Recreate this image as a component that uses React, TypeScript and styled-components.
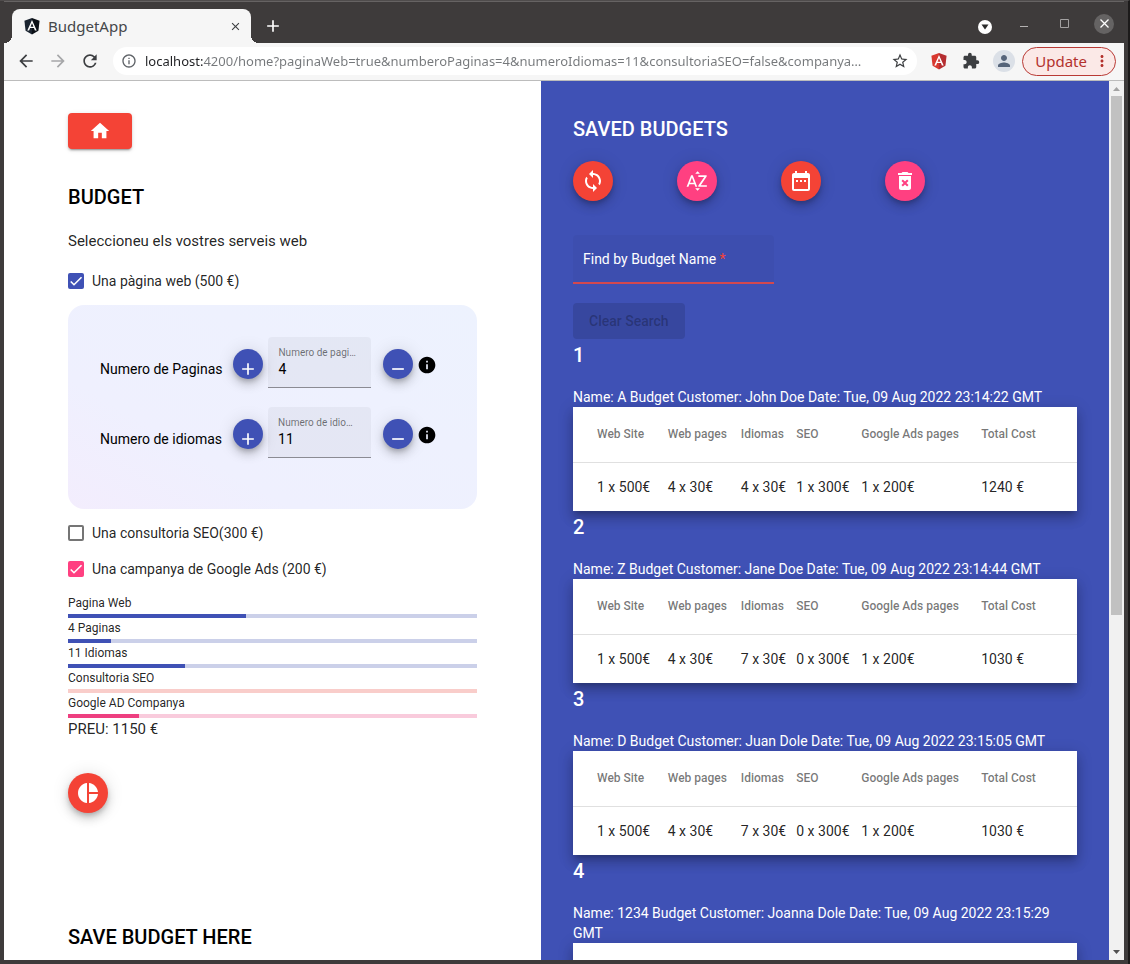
import React, { useState } from "react";
import styled, { createGlobalStyle } from "styled-components";
import {
  MdAdd,
  MdArrowBack,
  MdArrowForward,
  MdClose,
  MdDateRange,
  MdDeleteForever,
  MdExtension,
  MdHome,
  MdInfo,
  MdInfoOutline,
  MdMoreVert,
  MdPerson,
  MdPieChart,
  MdRefresh,
  MdRemove,
  MdSortByAlpha,
  MdStarBorder,
  MdSync,
} from "react-icons/md";

const color = {
  primary: "#3f51b5",
  accent: "#ff4081",
  warn: "#f44336",
  text: "rgba(0, 0, 0, 0.87)",
};

const chromeFont = '"Noto Sans", "Open Sans", sans-serif';
const fabShadow =
  "0 3px 5px -1px rgba(0,0,0,.2), 0 6px 10px 0 rgba(0,0,0,.14), 0 1px 18px 0 rgba(0,0,0,.12)";
const tick =
  "url(\"data:image/svg+xml,%3Csvg xmlns='http://www.w3.org/2000/svg' viewBox='0 0 24 24'%3E%3Cpath d='M4.1 12.7 9 17.6 20.3 6.3' fill='none' stroke='white' stroke-width='2.4'/%3E%3C/svg%3E\")";

const GlobalStyle = createGlobalStyle`
  *, *::before, *::after { box-sizing: border-box; }
  html, body, #root { height: 100%; }
  body { margin: 0; background: #3e3b3b; font-family: Roboto, sans-serif; font-size: 14px; color: ${color.text}; }
  button, input { font-family: inherit; }
  button { cursor: pointer; }
  svg { display: block; flex: none; }
`;

/* ---------- browser window ---------- */

const BrowserWindow = styled.div`
  display: flex;
  flex-direction: column;
  height: 100vh;
  overflow: hidden;
  padding: 0 4px 4px;
  background: #3e3b3b;
  border-top: 1px solid #4f4c4c;
  border-right: 2px solid #1c1a1a;
`;

const TitleBar = styled.header`
  display: flex;
  flex: none;
  align-items: flex-end;
  height: 42px;
  padding: 0 10px 0 8px;
  border-top: 1px solid #666363;
`;

const Tab = styled.div`
  position: relative;
  display: flex;
  align-items: center;
  gap: 8px;
  width: 239px;
  height: 34px;
  padding: 0 10px 0 12px;
  border-radius: 8px 8px 0 0;
  background: #f6f6f6;
  color: #45474a;
  font: 15px ${chromeFont};

  &::before,
  &::after {
    content: "";
    position: absolute;
    bottom: 0;
    width: 8px;
    height: 8px;
  }
  &::before {
    right: 100%;
    background: radial-gradient(circle at 0 0, transparent 8px, #f6f6f6 8px);
  }
  &::after {
    left: 100%;
    background: radial-gradient(circle at 100% 0, transparent 8px, #f6f6f6 8px);
  }
`;

const TabTitle = styled.span`
  flex: 1;
`;

const GlyphButton = styled.button<{ $color?: string; $size?: number }>`
  display: flex;
  flex: none;
  align-items: center;
  justify-content: center;
  width: ${(p) => p.$size ?? 20}px;
  height: ${(p) => p.$size ?? 20}px;
  padding: 0;
  border: 0;
  background: none;
  color: ${(p) => p.$color ?? "#3c3e41"};
`;

const NewTab = styled(GlyphButton)`
  height: 34px;
  margin-left: 12px;
`;

const WindowControls = styled.div`
  display: flex;
  align-items: center;
  align-self: center;
  gap: 20px;
  margin-left: auto;
  padding-top: 2px;
`;

const TabSearch = styled(GlyphButton)`
  width: 14px;
  height: 14px;
  margin: 6px 2px 0 0;
  border-radius: 50%;
  background: #fff;
`;

const CloseWindow = styled(GlyphButton)`
  border-radius: 50%;
  background: #656363;
`;

const Toolbar = styled.div`
  display: flex;
  flex: none;
  align-items: center;
  height: 38px;
  padding: 0 8px 1px 12px;
  border-bottom: 1px solid #bcbcbc;
  background: #f6f6f6;
`;

const NavButtons = styled.nav`
  display: flex;
  gap: 12px;
`;

const AddressBar = styled.div`
  display: flex;
  flex: 1;
  align-items: center;
  gap: 8px;
  min-width: 0;
  height: 28px;
  margin: 0 12px 0 13px;
  padding: 0 8px;
  border-radius: 14px;
  background: #fff;
`;

const Url = styled.input`
  flex: 1;
  min-width: 0;
  padding: 0;
  border: 0;
  outline: 0;
  background: linear-gradient(90deg, #202124 58px, #75787b 58px);
  background-clip: text;
  -webkit-text-fill-color: transparent;
  font: 13px/20px ${chromeFont};
  text-overflow: ellipsis;
`;

const ToolbarActions = styled.div`
  display: flex;
  align-items: center;
  gap: 12px;
`;

const Avatar = styled(GlyphButton)`
  border-radius: 50%;
  background: #dbe0e7;
`;

const UpdateButton = styled.button`
  display: flex;
  align-items: center;
  gap: 6px;
  height: 29px;
  margin-left: 7px;
  padding: 0 4px 0 12px;
  border: 1px solid #b93a35;
  border-radius: 15px;
  background: #fbe9e7;
  color: #b3312c;
  font: 15px ${chromeFont};
`;

const Viewport = styled.div`
  display: flex;
  flex: 1;
  min-height: 0;
`;

const Page = styled.main`
  display: grid;
  flex: 1;
  grid-template-columns: minmax(0, 537fr) minmax(0, 568fr);
  overflow: hidden;
  background: #fff;
`;

const ScrollTrack = styled.div`
  display: flex;
  flex: none;
  flex-direction: column;
  align-items: center;
  width: 15px;
  background: #f1f1f1;
`;

const ScrollArrow = styled.svg`
  width: 15px;
  height: 15px;
`;

const ScrollThumb = styled.div`
  width: 11px;
  height: 59%;
  background: #c1c1c1;
`;

const ScrollSpace = styled.div`
  flex: 1;
`;

/* ---------- shared page parts ---------- */

const Heading = styled.h2`
  margin: 0 0 16px;
  font-size: 20px;
  font-weight: 500;
  line-height: 32px;
  color: inherit;
`;

const Fab = styled.button<{ $bg: string; $size?: number }>`
  display: flex;
  flex: none;
  align-items: center;
  justify-content: center;
  width: ${(p) => p.$size ?? 40}px;
  height: ${(p) => p.$size ?? 40}px;
  padding: 0;
  border: 0;
  border-radius: 50%;
  background: ${(p) => p.$bg};
  color: #fff;
  box-shadow: ${fabShadow};
`;

/* ---------- budget form ---------- */

const FormColumn = styled.section`
  padding: 32px 64px;
  color: #000;
`;

const HomeLink = styled.a`
  display: flex;
  align-items: center;
  justify-content: center;
  width: 64px;
  height: 36px;
  margin-bottom: 32px;
  border-radius: 4px;
  background: ${color.warn};
  color: #fff;
  box-shadow: 0 3px 1px -2px rgba(0, 0, 0, 0.2), 0 2px 2px 0 rgba(0, 0, 0, 0.14),
    0 1px 5px 0 rgba(0, 0, 0, 0.12);
`;

const Intro = styled.p`
  margin: 0 0 16px;
  color: ${color.text};
  font-size: 15px;
  line-height: 24px;
`;

const CheckLabel = styled.label`
  display: flex;
  align-items: center;
  gap: 8px;
  margin-bottom: 12px;
  color: ${color.text};
  font-size: 14px;
  line-height: 24px;
`;

const CheckInput = styled.input<{ $color: string }>`
  appearance: none;
  flex: none;
  width: 16px;
  height: 16px;
  margin: 0;
  border: 2px solid #757575;
  border-radius: 2px;

  &:checked {
    border: 0;
    background: ${(p) => p.$color} ${tick} center / 16px no-repeat;
  }
`;

const WebPanel = styled.div`
  margin-bottom: 12px;
  padding: 32px;
  border-radius: 16px;
  background: linear-gradient(30deg, #f3edfd 0%, #eff0fe 30%, #edf2fe 100%);
`;

const QuantityRow = styled.div`
  display: flex;
  align-items: flex-start;
  height: 70px;
`;

const QuantityLabel = styled.span`
  margin-right: 11px;
  padding-top: 20px;
  font-size: 14px;
  line-height: 24px;
  white-space: nowrap;
`;

const StepFab = styled(Fab)`
  margin-top: 12px;
  padding-top: 10px;
`;

const FilledField = styled.div`
  display: flex;
  flex-direction: column;
  width: 103px;
  height: 51px;
  margin: 0 12px 0 5px;
  padding: 8px 10px 0;
  border-bottom: 1px solid #8b8b93;
  border-radius: 4px 4px 0 0;
  background: rgba(0, 0, 0, 0.04);
`;

const FieldLabel = styled.label`
  overflow: hidden;
  font-size: 10px;
  line-height: 16px;
  color: rgba(0, 0, 0, 0.54);
  text-overflow: ellipsis;
  white-space: nowrap;
`;

const FieldInput = styled.input`
  width: 100%;
  padding: 0;
  border: 0;
  outline: 0;
  background: none;
  color: inherit;
  font-size: 14px;
  line-height: 16px;
`;

const InfoButton = styled(GlyphButton)`
  margin: 18px 0 0 4px;
`;

const ProgressLabel = styled.div`
  color: ${color.text};
  font-size: 12px;
  line-height: 21px;
`;

const ProgressTrack = styled.div<{ $color: string }>`
  height: 4px;
  background: ${(p) => p.$color};
`;

const ProgressFill = styled.div<{ $color: string }>`
  height: 100%;
  background: ${(p) => p.$color};
`;

const Price = styled.p`
  margin: 0 0 33px;
  color: ${color.text};
  font-size: 15px;
  line-height: 22px;
`;

const SaveHeading = styled(Heading)`
  margin-top: 108px;
`;

/* ---------- saved budgets ---------- */

const SavedColumn = styled.section`
  padding: 32px;
  background: ${color.primary};
  color: #fff;
`;

const SortActions = styled.div`
  display: flex;
  gap: 64px;
  margin-bottom: 34px;
`;

const SearchField = styled.div`
  position: relative;
  width: 201px;
  height: 49px;
  margin-bottom: 19px;
  border-bottom: 2px solid #d2484f;
  border-radius: 4px 4px 0 0;
  background: rgba(0, 0, 0, 0.03);
`;

const SearchInput = styled.input`
  width: 100%;
  height: 100%;
  padding: 0 10px;
  border: 0;
  outline: 0;
  background: none;
  color: #fff;
  font-size: 14px;
`;

const SearchLabel = styled.label`
  position: absolute;
  top: 14px;
  left: 10px;
  line-height: 20px;
  pointer-events: none;
`;

const Required = styled.span`
  color: ${color.warn};
`;

const ClearButton = styled.button`
  display: block;
  height: 36px;
  padding: 0 16px;
  border: 0;
  border-radius: 4px;
  background: rgba(0, 0, 0, 0.12);
  color: rgba(0, 0, 0, 0.26);
  font-size: 14px;
  font-weight: 500;
`;

const BudgetTitle = styled.p`
  margin: 0;
  line-height: 20px;
`;

const BudgetTable = styled.table`
  width: 100%;
  border-collapse: collapse;
  table-layout: fixed;
  background: #fff;
  color: ${color.text};
  box-shadow: 0 5px 5px -3px rgba(0, 0, 0, 0.2), 0 8px 10px 1px rgba(0, 0, 0, 0.14),
    0 3px 14px 2px rgba(0, 0, 0, 0.12);

  th,
  td {
    padding: 0;
    text-align: left;
    white-space: nowrap;
  }
  th {
    height: 55px;
    border-bottom: 1px solid #e0e0e0;
    color: rgba(0, 0, 0, 0.54);
    font-size: 12px;
    font-weight: 500;
  }
  td {
    height: 49px;
    font-size: 14px;
  }
  th:first-child,
  td:first-child {
    padding-left: 24px;
  }
`;

const Col = styled.col<{ $share: number }>`
  width: ${(p) => p.$share}%;
`;

/* ---------- drawings ---------- */

const AngularLogo = ({ left, right }: { left: string; right: string }) => (
  <svg width="16" height="17" viewBox="0 0 32 34" aria-hidden="true">
    <path d="M16 0 0.8 5.5 3.2 25.6 16 33Z" fill={left} />
    <path d="M16 0 31.2 5.5 28.8 25.6 16 33Z" fill={right} />
    <path
      d="M16 3.8 6.6 25h3.6l1.9-4.8h7.8l1.9 4.8h3.6ZM16 10.6l2.9 6.7h-5.8Z"
      fill="#fff"
      fillRule="evenodd"
    />
  </svg>
);

const columns = [
  { title: "Web Site", share: 18.8 },
  { title: "Web pages", share: 14.5 },
  { title: "Idiomas", share: 11 },
  { title: "SEO", share: 12.9 },
  { title: "Google Ads pages", share: 23.8 },
  { title: "Total Cost", share: 19 },
];

const budgets = [
  {
    title: "Name: A Budget Customer: John Doe Date: Tue, 09 Aug 2022 23:14:22 GMT",
    cells: ["1 x 500€", "4 x 30€", "4 x 30€", "1 x 300€", "1 x 200€", "1240 €"],
  },
  {
    title: "Name: Z Budget Customer: Jane Doe Date: Tue, 09 Aug 2022 23:14:44 GMT",
    cells: ["1 x 500€", "4 x 30€", "7 x 30€", "0 x 300€", "1 x 200€", "1030 €"],
  },
  {
    title: "Name: D Budget Customer: Juan Dole Date: Tue, 09 Aug 2022 23:15:05 GMT",
    cells: ["1 x 500€", "4 x 30€", "7 x 30€", "0 x 300€", "1 x 200€", "1030 €"],
  },
  {
    title: "Name: 1234 Budget Customer: Joanna Dole Date: Tue, 09 Aug 2022 23:15:29 GMT",
    cells: [],
  },
];

const progress = [
  { label: "Pagina Web", value: 43.5, fill: color.primary, track: "#cbd0e9" },
  { label: "4 Paginas", value: 10.5, fill: color.primary, track: "#cbd0e9" },
  { label: "11 Idiomas", value: 28.7, fill: color.primary, track: "#cbd0e9" },
  { label: "Consultoria SEO", value: 0, fill: color.warn, track: "#f9cdca" },
  { label: "Google AD Companya", value: 17.4, fill: "#ee3f80", track: "#f9cbdc" },
];

type QuantityProps = { id: string; label: string; hint: string; initial: number };

const Quantity = ({ id, label, hint, initial }: QuantityProps) => {
  const [value, setValue] = useState(initial);
  return (
    <QuantityRow>
      <QuantityLabel>{label}</QuantityLabel>
      <StepFab $bg={color.primary} $size={30} aria-label="Add" onClick={() => setValue(value + 1)}>
        <MdAdd size={20} />
      </StepFab>
      <FilledField>
        <FieldLabel htmlFor={id}>{hint}</FieldLabel>
        <FieldInput id={id} value={value} onChange={(e) => setValue(Number(e.target.value) || 0)} />
      </FilledField>
      <StepFab $bg={color.primary} $size={30} aria-label="Remove" onClick={() => setValue(value - 1)}>
        <MdRemove size={20} />
      </StepFab>
      <InfoButton $color="#000" aria-label="Information">
        <MdInfo size={20} />
      </InfoButton>
    </QuantityRow>
  );
};

export default function App() {
  return (
    <BrowserWindow>
      <GlobalStyle />
      <TitleBar>
        <Tab>
          <AngularLogo left="#1b2430" right="#0b1017" />
          <TabTitle>BudgetApp</TabTitle>
          <GlyphButton $size={12} aria-label="Close tab">
            <MdClose size={13} />
          </GlyphButton>
        </Tab>
        <NewTab $color="#fff" aria-label="New tab">
          <MdAdd size={20} />
        </NewTab>
        <WindowControls>
          <TabSearch aria-label="Search tabs">
            <svg width="8" height="6" viewBox="0 0 8 6">
              <path d="M0.5 0.5h7L4 5.5Z" fill="#2b2b2b" />
            </svg>
          </TabSearch>
          <GlyphButton $color="#b4b2b2" aria-label="Minimize">
            <svg width="10" height="10" viewBox="0 0 10 10">
              <path d="M1 7.5h8" stroke="currentColor" />
            </svg>
          </GlyphButton>
          <GlyphButton $color="#a3a1a1" aria-label="Maximize">
            <svg width="9" height="9" viewBox="0 0 9 9">
              <path d="M.5.5h8v8h-8z" fill="none" stroke="currentColor" />
            </svg>
          </GlyphButton>
          <CloseWindow $color="#fff" aria-label="Close window">
            <svg width="9" height="9" viewBox="0 0 9 9">
              <path d="m.5.5 8 8m0-8-8 8" stroke="currentColor" strokeWidth="1.3" />
            </svg>
          </CloseWindow>
        </WindowControls>
      </TitleBar>

      <Toolbar>
        <NavButtons>
          <GlyphButton aria-label="Back">
            <MdArrowBack size={20} />
          </GlyphButton>
          <GlyphButton $color="#a6a7a9" aria-label="Forward">
            <MdArrowForward size={20} />
          </GlyphButton>
          <GlyphButton aria-label="Reload">
            <MdRefresh size={20} />
          </GlyphButton>
        </NavButtons>
        <AddressBar>
          <MdInfoOutline size={16} color="#5f6368" />
          <Url
            aria-label="Address"
            defaultValue="localhost:4200/home?paginaWeb=true&numberoPaginas=4&numeroIdiomas=11&consultoriaSEO=false&companya…"
          />
          <GlyphButton $size={18} aria-label="Bookmark">
            <MdStarBorder size={18} />
          </GlyphButton>
        </AddressBar>
        <ToolbarActions>
          <GlyphButton aria-label="Angular DevTools">
            <AngularLogo left="#d8382f" right="#b52e31" />
          </GlyphButton>
          <GlyphButton aria-label="Extensions">
            <MdExtension size={18} />
          </GlyphButton>
          <Avatar $color="#56657a" $size={22} aria-label="Profile">
            <MdPerson size={18} />
          </Avatar>
        </ToolbarActions>
        <UpdateButton>
          Update
          <MdMoreVert size={18} />
        </UpdateButton>
      </Toolbar>

      <Viewport>
        <Page>
          <FormColumn>
            <HomeLink href="#home" aria-label="Home">
              <MdHome size={22} />
            </HomeLink>
            <Heading>BUDGET</Heading>
            <Intro>Seleccioneu els vostres serveis web</Intro>
            <CheckLabel>
              <CheckInput type="checkbox" defaultChecked $color={color.primary} />
              Una pàgina web (500 €)
            </CheckLabel>
            <WebPanel>
              <Quantity id="pages" label="Numero de Paginas" hint="Numero de pagi…" initial={4} />
              <Quantity id="languages" label="Numero de idiomas" hint="Numero de idio…" initial={11} />
            </WebPanel>
            <CheckLabel>
              <CheckInput type="checkbox" $color={color.warn} />
              Una consultoria SEO(300 €)
            </CheckLabel>
            <CheckLabel>
              <CheckInput type="checkbox" defaultChecked $color={color.accent} />
              Una campanya de Google Ads (200 €)
            </CheckLabel>
            {progress.map((p) => (
              <div key={p.label}>
                <ProgressLabel>{p.label}</ProgressLabel>
                <ProgressTrack $color={p.track}>
                  <ProgressFill $color={p.fill} style={{ width: `${p.value}%` }} />
                </ProgressTrack>
              </div>
            ))}
            <Price>PREU: 1150 €</Price>
            <Fab $bg={color.warn} aria-label="Chart">
              <MdPieChart size={24} />
            </Fab>
            <SaveHeading>SAVE BUDGET HERE</SaveHeading>
          </FormColumn>

          <SavedColumn>
            <Heading>SAVED BUDGETS</Heading>
            <SortActions>
              <Fab $bg={color.warn} aria-label="Reset order">
                <MdSync size={24} />
              </Fab>
              <Fab $bg={color.accent} aria-label="Sort by name">
                <MdSortByAlpha size={24} />
              </Fab>
              <Fab $bg={color.warn} aria-label="Sort by date">
                <MdDateRange size={24} />
              </Fab>
              <Fab $bg={color.accent} aria-label="Delete all">
                <MdDeleteForever size={24} />
              </Fab>
            </SortActions>
            <SearchField>
              <SearchInput id="search" required />
              <SearchLabel htmlFor="search">
                Find by Budget Name <Required>*</Required>
              </SearchLabel>
            </SearchField>
            <ClearButton disabled>Clear Search</ClearButton>
            {budgets.map((b, i) => (
              <article key={b.title}>
                <Heading as="h3">{i + 1}</Heading>
                <BudgetTitle>{b.title}</BudgetTitle>
                <BudgetTable>
                  <colgroup>
                    {columns.map((c) => (
                      <Col key={c.title} $share={c.share} />
                    ))}
                  </colgroup>
                  <thead>
                    <tr>
                      {columns.map((c) => (
                        <th key={c.title}>{b.cells.length > 0 && c.title}</th>
                      ))}
                    </tr>
                  </thead>
                  <tbody>
                    <tr>
                      {b.cells.map((cell, n) => (
                        <td key={n}>{cell}</td>
                      ))}
                    </tr>
                  </tbody>
                </BudgetTable>
              </article>
            ))}
          </SavedColumn>
        </Page>
        <ScrollTrack>
          <ScrollArrow viewBox="0 0 15 15" aria-hidden="true">
            <path d="M4 10h7L7.5 6Z" fill="#a3a3a3" />
          </ScrollArrow>
          <ScrollThumb />
          <ScrollSpace />
          <ScrollArrow viewBox="0 0 15 15" aria-hidden="true">
            <path d="M4 5h7L7.5 9Z" fill="#505050" />
          </ScrollArrow>
        </ScrollTrack>
      </Viewport>
    </BrowserWindow>
  );
}
